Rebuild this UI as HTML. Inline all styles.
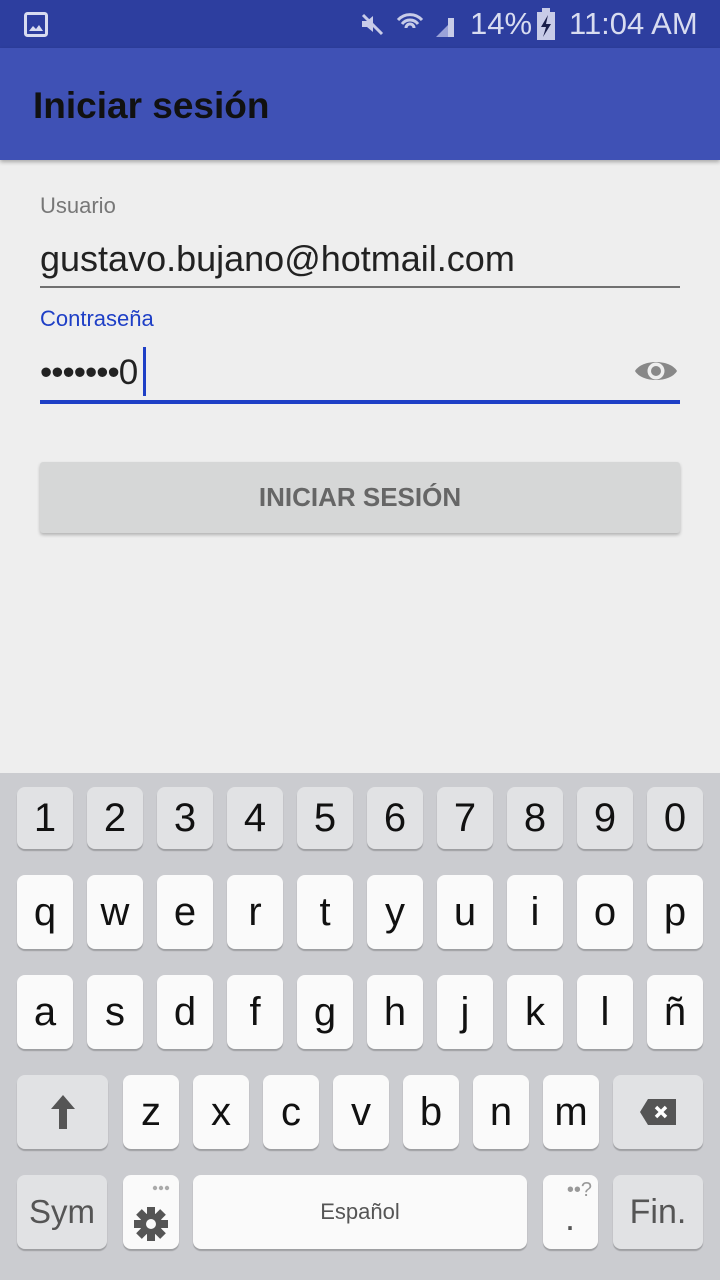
<!DOCTYPE html>
<html><head><meta charset="utf-8"><style>
*{margin:0;padding:0;box-sizing:border-box}
body{width:720px;height:1280px;position:relative;background:#eeeeee;font-family:"Liberation Sans",sans-serif;overflow:hidden}
.abs{position:absolute}
.k{position:absolute;border-radius:8px;background:#fafafa;box-shadow:0 2px 1px rgba(0,0,0,0.22);display:flex;align-items:center;justify-content:center;color:#111;font-size:40px}
.g{background:#e1e2e4}
</style></head><body>
<div class="abs" style="left:0;top:0;width:720px;height:48px;background:#2d3e9f"></div>
<svg class="abs" style="left:24px;top:12px" width="24" height="26" viewBox="0 0 24 26"><rect x="1.5" y="1.5" width="21" height="22" rx="2" fill="none" stroke="#d8dcf0" stroke-width="3"/><path d="M5 19 L9 14 L12 17 L15 13 L19 19 Z" fill="#d8dcf0"/></svg>
<svg class="abs" style="left:360px;top:12px" width="100" height="26" viewBox="0 0 100 26"><path d="M2 9h5l6-5v16l-6-5H2z" fill="#c8cce8"/><path d="M3 3L22 22" stroke="#c8cce8" stroke-width="3"/><path d="M38 8a16 16 0 0 1 24 0M42 12a10 10 0 0 1 16 0M46 16a4 4 0 0 1 8 0" stroke="#c8cce8" stroke-width="3" fill="none"/><path d="M76 25L90 11V25Z" fill="#9aa2d8"/><rect x="88" y="6" width="6" height="19" fill="#c8cce8"/></svg>
<div class="abs" style="left:470px;top:6px;color:#d8dcf0;font-size:31px">14%</div>
<svg class="abs" style="left:535px;top:8px" width="22" height="32" viewBox="0 0 22 32"><rect x="7" y="0" width="8" height="4" fill="#c8cce8"/><rect x="2" y="4" width="18" height="28" fill="#c8cce8"/><path d="M13 7L6 19h5l-3 10 8-13h-5z" fill="#1a1f4a"/></svg>
<div class="abs" style="left:569px;top:6px;color:#d8dcf0;font-size:31px">11:04 AM</div>
<div class="abs" style="left:0;top:48px;width:720px;height:112px;background:#3f51b5;box-shadow:0 2px 4px rgba(0,0,0,0.3)"></div>
<div class="abs" style="left:33px;top:85px;font-size:37px;font-weight:bold;color:#111">Iniciar sesión</div>
<div class="abs" style="left:40px;top:193px;font-size:22px;color:#777">Usuario</div>
<div class="abs" style="left:40px;top:238px;font-size:36px;color:#222">gustavo.bujano@hotmail.com</div>
<div class="abs" style="left:40px;top:286px;width:640px;height:2px;background:#707070"></div>
<div class="abs" style="left:40px;top:306px;font-size:22px;color:#1e3fc6">Contraseña</div>
<div class="abs" style="left:40px;top:353px;font-size:35px;color:#222;letter-spacing:-1px">•••••••0</div>
<div class="abs" style="left:143px;top:347px;width:3px;height:49px;background:#1e3fc6"></div>
<svg class="abs" style="left:634px;top:355px" width="44" height="32" viewBox="0 0 44 32"><path d="M1 16C8 4 36 4 43 16C36 28 8 28 1 16Z" fill="#888"/><circle cx="22" cy="16" r="8.5" fill="#eee"/><circle cx="22" cy="16" r="5" fill="#888"/></svg>
<div class="abs" style="left:40px;top:400px;width:640px;height:4px;background:#1e3fc6"></div>
<div class="abs" style="left:40px;top:462px;width:640px;height:71px;background:#d6d7d7;border-radius:3px;box-shadow:0 2px 3px rgba(0,0,0,0.25);display:flex;align-items:center;justify-content:center;font-size:26px;font-weight:bold;color:#666">INICIAR SESIÓN</div>
<div class="abs" style="left:0;top:773px;width:720px;height:507px;background:#cbccd0"></div>
<div class="k g" style="left:17px;top:787px;width:56px;height:62px">1</div>
<div class="k g" style="left:87px;top:787px;width:56px;height:62px">2</div>
<div class="k g" style="left:157px;top:787px;width:56px;height:62px">3</div>
<div class="k g" style="left:227px;top:787px;width:56px;height:62px">4</div>
<div class="k g" style="left:297px;top:787px;width:56px;height:62px">5</div>
<div class="k g" style="left:367px;top:787px;width:56px;height:62px">6</div>
<div class="k g" style="left:437px;top:787px;width:56px;height:62px">7</div>
<div class="k g" style="left:507px;top:787px;width:56px;height:62px">8</div>
<div class="k g" style="left:577px;top:787px;width:56px;height:62px">9</div>
<div class="k g" style="left:647px;top:787px;width:56px;height:62px">0</div>
<div class="k" style="left:17px;top:875px;width:56px;height:74px">q</div>
<div class="k" style="left:87px;top:875px;width:56px;height:74px">w</div>
<div class="k" style="left:157px;top:875px;width:56px;height:74px">e</div>
<div class="k" style="left:227px;top:875px;width:56px;height:74px">r</div>
<div class="k" style="left:297px;top:875px;width:56px;height:74px">t</div>
<div class="k" style="left:367px;top:875px;width:56px;height:74px">y</div>
<div class="k" style="left:437px;top:875px;width:56px;height:74px">u</div>
<div class="k" style="left:507px;top:875px;width:56px;height:74px">i</div>
<div class="k" style="left:577px;top:875px;width:56px;height:74px">o</div>
<div class="k" style="left:647px;top:875px;width:56px;height:74px">p</div>
<div class="k" style="left:17px;top:975px;width:56px;height:74px">a</div>
<div class="k" style="left:87px;top:975px;width:56px;height:74px">s</div>
<div class="k" style="left:157px;top:975px;width:56px;height:74px">d</div>
<div class="k" style="left:227px;top:975px;width:56px;height:74px">f</div>
<div class="k" style="left:297px;top:975px;width:56px;height:74px">g</div>
<div class="k" style="left:367px;top:975px;width:56px;height:74px">h</div>
<div class="k" style="left:437px;top:975px;width:56px;height:74px">j</div>
<div class="k" style="left:507px;top:975px;width:56px;height:74px">k</div>
<div class="k" style="left:577px;top:975px;width:56px;height:74px">l</div>
<div class="k" style="left:647px;top:975px;width:56px;height:74px">ñ</div>
<div class="k g" style="left:17px;top:1075px;width:91px;height:74px"><svg width="26" height="36" viewBox="0 0 26 36"><path d="M13 1L25 15H17V35H9V15H1Z" fill="#555"/></svg></div>
<div class="k" style="left:123px;top:1075px;width:56px;height:74px">z</div>
<div class="k" style="left:193px;top:1075px;width:56px;height:74px">x</div>
<div class="k" style="left:263px;top:1075px;width:56px;height:74px">c</div>
<div class="k" style="left:333px;top:1075px;width:56px;height:74px">v</div>
<div class="k" style="left:403px;top:1075px;width:56px;height:74px">b</div>
<div class="k" style="left:473px;top:1075px;width:56px;height:74px">n</div>
<div class="k" style="left:543px;top:1075px;width:56px;height:74px">m</div>
<div class="k g" style="left:613px;top:1075px;width:90px;height:74px"><svg width="36" height="26" viewBox="0 0 36 26"><path d="M0 13L8 0H36V26H8Z" fill="#555"/><path d="M16 8L26 18M26 8L16 18" stroke="#fff" stroke-width="3.5"/></svg></div>
<div class="k g" style="left:17px;top:1175px;width:90px;height:74px;font-size:33px;color:#555">Sym</div>
<div class="k" style="left:123px;top:1175px;width:56px;height:74px"><svg width="40" height="66" viewBox="0 0 40 66"><circle cx="24" cy="9" r="2.2" fill="#aaa"/><circle cx="30" cy="9" r="2.2" fill="#aaa"/><circle cx="36" cy="9" r="2.2" fill="#aaa"/><g transform="translate(20,45)" fill="#555"><circle r="11"/><rect x="-4" y="-17" width="8" height="34"/><rect x="-17" y="-4" width="34" height="8"/><rect x="-4" y="-17" width="8" height="34" transform="rotate(45)"/><rect x="-4" y="-17" width="8" height="34" transform="rotate(-45)"/><circle r="5" fill="#fafafa"/></g></svg></div>
<div class="k" style="left:193px;top:1175px;width:334px;height:74px;font-size:22px;color:#555">Español</div>
<div class="k" style="left:543px;top:1175px;width:55px;height:74px"><span style="position:absolute;right:6px;top:4px;font-size:20px;color:#999">••?</span><span style="position:absolute;left:22px;top:22px;font-size:36px;color:#555">.</span></div>
<div class="k g" style="left:613px;top:1175px;width:90px;height:74px;font-size:34px;color:#555">Fin.</div>
</body></html>
